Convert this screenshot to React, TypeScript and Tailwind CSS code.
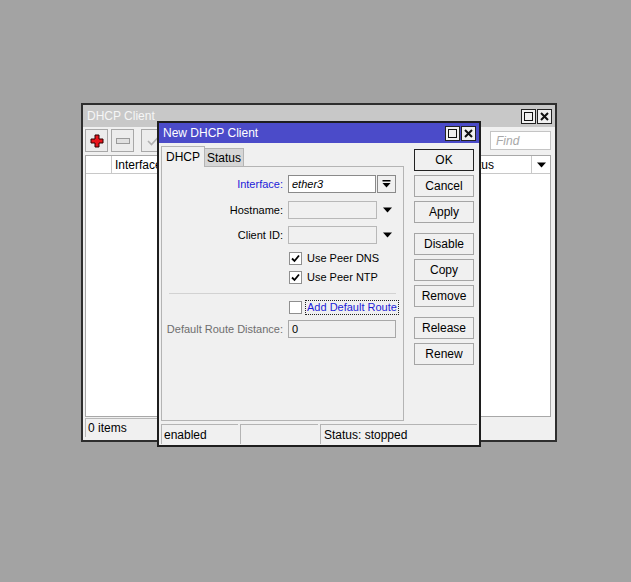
import React from 'react';

const font = { fontFamily: '"Liberation Sans", Arial, sans-serif' };

function DownArrow({ bar = false }: { bar?: boolean }) {
  return (
    <svg width="9" height="8" viewBox="0 0 9 8">
      {bar && <rect x="0.5" y="0" width="8" height="1.5" fill="#000" />}
      <polygon points={bar ? '0.5,3 8.5,3 4.5,7.5' : '0,1.5 9,1.5 4.5,6.5'} fill="#000" />
    </svg>
  );
}

function CheckBox({ checked }: { checked?: boolean }) {
  return (
    <div className="w-[13px] h-[13px] bg-white border border-[#8f8f8f] flex items-center justify-center">
      {checked && (
        <svg width="9" height="9" viewBox="0 0 9 9">
          <path d="M1 4.5 L3.5 7 L8 1.5" fill="none" stroke="#000" strokeWidth="1.8" />
        </svg>
      )}
    </div>
  );
}

function TitleButtons() {
  return (
    <div className="flex gap-[1px]">
      <div className="w-[15px] h-[15px] border border-[#222] bg-[#f0f0f0] flex items-center justify-center">
        <div className="w-[9px] h-[9px] border-[1.5px] border-[#111]" />
      </div>
      <div className="w-[15px] h-[15px] border border-[#222] bg-[#f0f0f0] flex items-center justify-center">
        <svg width="9" height="9" viewBox="0 0 9 9">
          <path d="M1 1 L8 8 M8 1 L1 8" stroke="#111" strokeWidth="2" />
        </svg>
      </div>
    </div>
  );
}

function SideButton({ label, primary }: { label: string; primary?: boolean }) {
  return (
    <div
      className={`w-[60px] h-[22px] flex items-center justify-center text-[12px] bg-[#f0f0f0] border ${
        primary ? 'border-[#222]' : 'border-[#a5a5a5]'
      }`}
    >
      {label}
    </div>
  );
}

function OuterWindow() {
  return (
    <div className="absolute left-[81px] top-[103px] w-[476px] h-[339px] border-2 border-[#2e2e2e] bg-[#f0f0f0] flex flex-col">
      {/* title bar */}
      <div className="h-[22px] bg-[#c8c8c8] flex items-center justify-between pl-[4px] pr-[3px]">
        <span className="text-[12px] text-[#f6f6f6]">DHCP Client</span>
        <TitleButtons />
      </div>

      {/* toolbar */}
      <div className="h-[28px] flex items-start pt-[2px] pl-[2px] pr-[4px]">
        <div className="w-[23px] h-[23px] border border-[#a8a8a8] bg-[#ececec] flex items-center justify-center">
          <svg width="14" height="14" viewBox="0 0 14 14">
            <path d="M5 1 H9 V5 H13 V9 H9 V13 H5 V9 H1 V5 H5 Z" fill="#e8141b" stroke="#2a0000" strokeWidth="1" />
          </svg>
        </div>
        <div className="ml-[3px] w-[23px] h-[23px] border border-[#a8a8a8] bg-[#ececec] flex items-center justify-center">
          <svg width="14" height="6" viewBox="0 0 14 6">
            <rect x="0.5" y="0.5" width="13" height="5" fill="#e0e0e0" stroke="#9a9a9a" />
          </svg>
        </div>
        <div className="ml-[7px] w-[23px] h-[23px] border border-[#a8a8a8] bg-[#ececec] flex items-center justify-center">
          <svg width="12" height="10" viewBox="0 0 12 10">
            <path d="M1 5 L4.5 8.5 L11 1.5" fill="none" stroke="#b0b0b0" strokeWidth="1.6" />
          </svg>
        </div>
        <div className="ml-auto mt-[2px] w-[61px] h-[19px] bg-white border border-[#c4c4c4] flex items-center pl-[5px]">
          <span className="text-[12px] italic text-[#a8a8a8]">Find</span>
        </div>
      </div>

      {/* table */}
      <div className="mx-[2px] mr-[4px] h-[262px] bg-white border border-[#a8a8a8] flex flex-col">
        <div className="h-[18px] flex border-b border-[#c8c8c8] text-[12px] whitespace-nowrap">
          <div className="w-[26px] border-r border-[#c8c8c8]" />
          <div className="pl-[3px] w-[120px] border-r border-[#c8c8c8] flex items-center">Interface</div>
          <div className="flex-1 flex items-center pl-[228px] border-r border-[#c8c8c8]">Status</div>
          <div className="w-[18px] flex items-center justify-center">
            <DownArrow />
          </div>
        </div>
      </div>

      {/* status */}
      <div className="mt-[1px] ml-[2px] h-[19px] flex">
        <div className="w-[155px] border-t border-l border-[#b8b8b8] pl-[2px] flex items-center text-[12px]">
          0 items
        </div>
      </div>
    </div>
  );
}

function FormRow({
  label,
  children,
  labelClass = 'text-black',
}: {
  label: string;
  children: React.ReactNode;
  labelClass?: string;
}) {
  return (
    <div className="flex items-center h-[18px]">
      <div className={`w-[121px] text-right whitespace-nowrap ${labelClass}`}>{label}</div>
      <div className="ml-[5px] flex items-center">{children}</div>
    </div>
  );
}

function CheckRow({ label, checked, focused }: { label: string; checked?: boolean; focused?: boolean }) {
  return (
    <div className="flex items-center h-[15px] pl-[127px] whitespace-nowrap">
      <CheckBox checked={checked} />
      {focused ? (
        <span className="ml-[3px] px-[1px] text-[#1c1cd8] border border-dotted border-[#222] leading-[13px]">
          {label}
        </span>
      ) : (
        <span className="ml-[5px]">{label}</span>
      )}
    </div>
  );
}

function DialogWindow() {
  return (
    <div className="absolute left-[157px] top-[121px] w-[324px] h-[326px] border-2 border-[#1e1e1e] bg-[#f0f0f0] flex flex-col text-[12px]">
      {/* title bar */}
      <div className="h-[20px] bg-[#4b4bc9] flex items-center justify-between pl-[4px] pr-[3px]">
        <span className="text-white">New DHCP Client</span>
        <TitleButtons />
      </div>

      <div className="flex h-[279px]">
        {/* left side: tabs + panel */}
        <div className="pl-[2px] pt-[2px] flex flex-col">
          <div className="flex items-end h-[21px]">
            <div className="w-[44px] h-[21px] border-t border-l border-r border-[#b4b4b4] bg-[#f0f0f0] flex items-center justify-center relative z-10 -mb-[1px] pb-[1px]">
              DHCP
            </div>
            <div className="w-[39px] h-[18px] border-t border-r border-[#b4b4b4] bg-[#d6d6d6] flex items-center justify-center">
              Status
            </div>
          </div>
          <div className="w-[243px] h-[255px] border border-[#b4b4b4] flex flex-col pt-[8px] text-[11px]">
            <FormRow label="Interface:" labelClass="text-[#1c1cd8]">
              <div className="w-[88px] h-[18px] bg-white border border-[#8a8a8a] flex items-center pl-[3px]">
                <span className="italic">ether3</span>
              </div>
              <div className="ml-[1px] w-[19px] h-[18px] border border-[#8a8a8a] bg-[#f0f0f0] flex items-center justify-center">
                <DownArrow bar />
              </div>
            </FormRow>
            <div className="h-[8px]" />
            <FormRow label="Hostname:">
              <div className="w-[89px] h-[18px] bg-[#f0f0f0] border border-[#b8b8b8]" />
              <div className="w-[19px] flex items-center justify-center pl-[1px]">
                <DownArrow />
              </div>
            </FormRow>
            <div className="h-[7px]" />
            <FormRow label="Client ID:">
              <div className="w-[89px] h-[18px] bg-[#f0f0f0] border border-[#b8b8b8]" />
              <div className="w-[19px] flex items-center justify-center pl-[1px]">
                <DownArrow />
              </div>
            </FormRow>
            <div className="h-[7px]" />
            <CheckRow label="Use Peer DNS" checked />
            <div className="h-[4px]" />
            <CheckRow label="Use Peer NTP" checked />
            <div className="mt-[8px] mx-[7px] h-px bg-[#d2d2d2]" />
            <div className="h-[6px]" />
            <CheckRow label="Add Default Route" focused />
            <div className="h-[5px]" />
            <FormRow label="Default Route Distance:" labelClass="text-[#6e6e6e]">
              <div className="w-[108px] h-[18px] bg-[#f0f0f0] border border-[#a8a8a8] flex items-center pl-[3px]">
                <span>0</span>
              </div>
            </FormRow>
          </div>
        </div>

        {/* right side: buttons */}
        <div className="ml-[10px] pt-[6px] flex flex-col">
          <SideButton label="OK" primary />
          <div className="h-[4px]" />
          <SideButton label="Cancel" />
          <div className="h-[4px]" />
          <SideButton label="Apply" />
          <div className="h-[10px]" />
          <SideButton label="Disable" />
          <div className="h-[4px]" />
          <SideButton label="Copy" />
          <div className="h-[4px]" />
          <SideButton label="Remove" />
          <div className="h-[10px]" />
          <SideButton label="Release" />
          <div className="h-[4px]" />
          <SideButton label="Renew" />
        </div>
      </div>

      {/* status bar */}
      <div className="mt-[2px] ml-[2px] mr-[2px] h-[20px] flex">
        <div className="w-[77px] border-t border-l border-[#b4b4b4] pl-[2px] flex items-center">enabled</div>
        <div className="ml-[2px] w-[78px] border-t border-l border-[#b4b4b4]" />
        <div className="ml-[2px] flex-1 border-t border-l border-[#b4b4b4] pl-[3px] flex items-center">
          Status: stopped
        </div>
      </div>
    </div>
  );
}

export default function App() {
  return (
    <div className="relative w-[631px] h-[582px] bg-[#a3a3a3] overflow-hidden text-black" style={font}>
      <OuterWindow />
      <DialogWindow />
    </div>
  );
}
